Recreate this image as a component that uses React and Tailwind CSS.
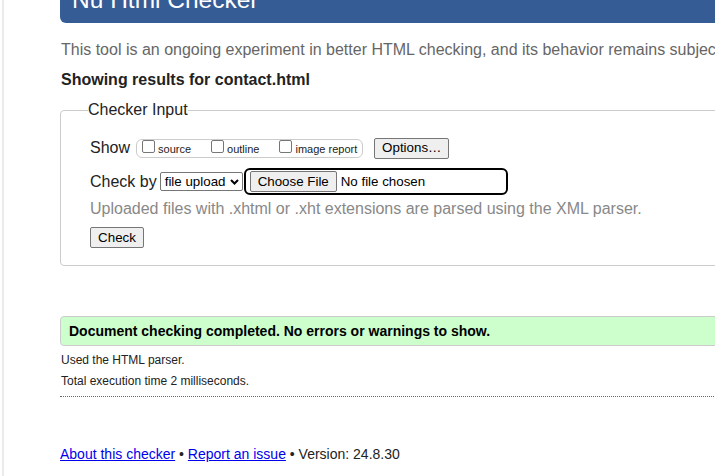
import React from "react";

const F = { fontFamily: '"Liberation Sans", Arial, sans-serif' };

function Box({ label, last }) {
  return (
    <span className={`flex items-end ${last ? "mr-[5px]" : "mr-[20px]"}`}>
      <span className="w-[13px] h-[13px] border border-[#767676] rounded-[2px] bg-white mr-[3px] mb-[4px]" />
      <span className="text-[11px] leading-[13px] mb-[1px]">{label}</span>
    </span>
  );
}

function Btn({ children, className = "" }) {
  return (
    <span
      className={`inline-flex items-center justify-center h-[21px] bg-[#efefef] border border-[#767676] rounded-[2px] text-[13.33px] text-black ${className}`}
    >
      {children}
    </span>
  );
}

export default function App() {
  return (
    <div
      className="w-[715px] h-[476px] overflow-hidden bg-white flex text-[#222]"
      style={F}
    >
      <div className="w-[2px] shrink-0" />
      <div className="w-[2px] shrink-0 bg-[#ebebeb]" />
      <div className="pl-[56px] w-[900px] shrink-0 flex flex-col">
        <div className="h-[23px] bg-[#365c96] rounded-bl-[6px] flex items-end pl-[12px] pb-[11px]">
          <h1 className="text-white text-[24.5px] leading-none whitespace-nowrap">
            Nu Html Checker
          </h1>
        </div>
        <p className="mt-[18px] text-[16px] leading-[18px] text-[#666] pl-[1px] whitespace-nowrap">
          This tool is an ongoing experiment in better HTML checking, and its
          behavior remains subject to change
        </p>
        <p className="mt-[12px] text-[16px] leading-[18px] font-bold text-[#222] pl-[1px]">
          Showing results for contact.html
        </p>

        <fieldset className="mt-[12px] border border-[#cccccc] rounded-[4px] pl-[29px] pb-[17px]">
          <legend className="text-[16px] leading-[18px] -ml-[2px] text-[#222]">
            Checker Input
          </legend>
          <div className="mt-[19px] h-[20px] flex items-center">
            <span className="text-[16px] leading-[18px]">Show</span>
            <span className="ml-[6px] h-[19px] border border-[#cccccc] rounded-[6px] flex items-end pl-[5px]">
              <Box label="source" />
              <Box label="outline" />
              <Box label="image report" last />
            </span>
            <Btn className="ml-[11px] w-[75px] h-[20px]">Options…</Btn>
          </div>

          <div className="mt-[10px] h-[27px] flex items-center">
            <span className="text-[16px] leading-[18px]">Check by</span>
            <span className="ml-[3px] w-[83px] h-[19px] border border-[#767676] rounded-[2px] flex items-center pl-[4px] text-[13.33px] text-black">
              <span className="whitespace-nowrap">file upload</span>
              <svg
                width="9"
                height="6"
                viewBox="0 0 9 6"
                className="ml-[5px]"
              >
                <polyline
                  points="1,1 4.5,4.5 8,1"
                  fill="none"
                  stroke="#000"
                  strokeWidth="2"
                />
              </svg>
            </span>
            <span className="ml-[1px] w-[264px] h-[27px] border-2 border-black rounded-[6px] flex items-center pl-[4px]">
              <Btn className="w-[87px]">Choose File</Btn>
              <span className="ml-[4px] text-[13.33px] text-black whitespace-nowrap">
                No file chosen
              </span>
            </span>
          </div>

          <p className="mt-[5px] text-[16px] leading-[18px] text-[#888] whitespace-nowrap">
            Uploaded files with .xhtml or .xht extensions are parsed using the
            XML parser.
          </p>
          <div className="mt-[9px] flex">
            <Btn className="w-[54px]">Check</Btn>
          </div>
        </fieldset>

        <div className="mt-[50px] h-[30px] bg-[#ccffcc] border border-[#cccccc] rounded-l-[4px] flex items-center pl-[8px]">
          <span className="text-[14px] leading-[16px] font-bold text-black whitespace-nowrap">
            Document checking completed. No errors or warnings to show.
          </span>
        </div>
        <p className="mt-[7px] text-[12px] leading-[14px] text-[#222] pl-[1px]">
          Used the HTML parser.
        </p>
        <p className="mt-[7px] text-[12px] leading-[14px] text-[#222] pl-[1px]">
          Total execution time 2 milliseconds.
        </p>
        <div className="mt-[8px] border-t border-dotted border-[#666]" />

        <p className="mt-[49px] text-[14px] leading-[16px] text-[#222] whitespace-nowrap">
          <a href="#" className="text-[#0000ee] underline">
            About this checker
          </a>
          {" • "}
          <a href="#" className="text-[#0000ee] underline">
            Report an issue
          </a>
          {" • Version: 24.8.30"}
        </p>
      </div>
    </div>
  );
}
